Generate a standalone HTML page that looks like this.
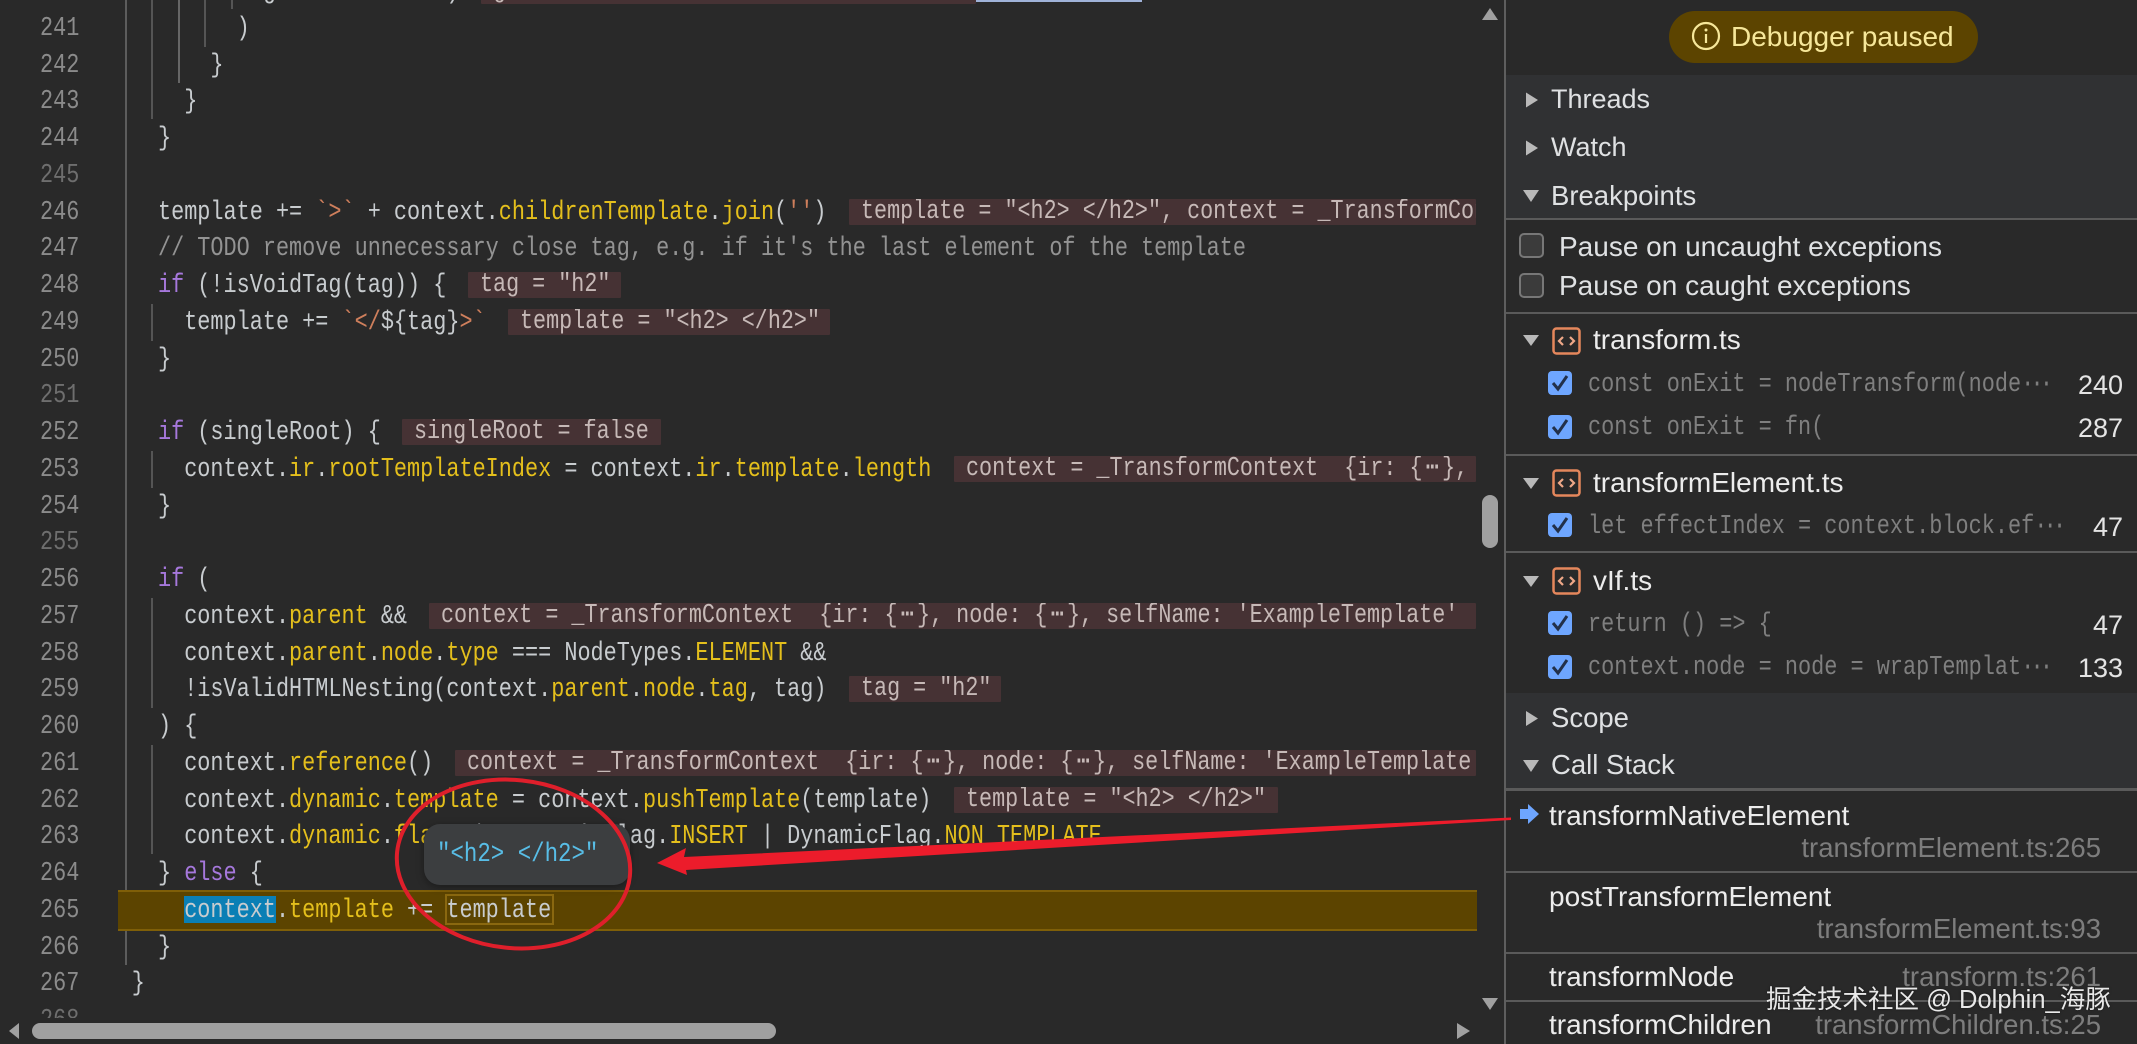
<!DOCTYPE html>
<html lang="en">
<head>
<meta charset="utf-8">
<title>Debugger paused</title>
<style>
html,body{margin:0;padding:0;background:#292929;width:2137px;height:1044px;overflow:hidden}
#root{position:relative;width:2137px;height:1044px;overflow:hidden;background:#292929;font-family:"Liberation Sans","Noto Sans CJK SC",sans-serif}
.abs{position:absolute}
#clip{position:absolute;left:0;top:0;width:1477px;height:1018px;overflow:hidden}
#code{position:absolute;left:39.8px;top:-26px;transform:scaleX(.809);transform-origin:0 0;font:27px/36.75px "Liberation Mono","DejaVu Sans Mono",monospace;color:#c8cccf}
#code div{height:36.75px;white-space:pre}
#code b{font-weight:normal;color:#e4bf1c}
#code em{font-style:normal;color:#a678dc}
#code s{text-decoration:none;color:#cf7f5c}
#code i{font-style:normal;color:#939393}
#code u{text-decoration:none;color:#8b8b8b}
#code u.d{color:#6e6e6e}
.g{position:absolute;width:2px;background:#555}
.h{position:absolute;height:26px;background:#463234;overflow:hidden;border-radius:1px}
.h span{position:absolute;left:11.5px;top:0;transform:scaleX(.805);transform-origin:0 0;white-space:pre;font:27px/26px "Liberation Mono","DejaVu Sans Mono",monospace;color:#c6b9b7}
.h a{padding:0 4px}
.sec{position:absolute;left:1506px;width:631px;background:#303133}
.div{position:absolute;left:1506px;width:631px;height:2px;background:#5a5a5a}
.t{position:absolute;white-space:pre;font-size:28px;line-height:38px;height:38px;color:#dfe1e3}
.m{position:absolute;left:1588px;white-space:pre;font:27px/36px "Liberation Mono","DejaVu Sans Mono",monospace;color:#7f7f7f;transform:scaleX(.81);transform-origin:0 0}
.m span{letter-spacing:-4.6px}
.n{position:absolute;right:14px;white-space:pre;font-size:27px;line-height:38px;color:#e4e4e4}
.l{position:absolute;right:36px;white-space:pre;font-size:27.5px;line-height:38px;color:#7d7d7d}
.cb{position:absolute;left:1518.5px;width:21px;height:21px;border:2px solid #777;border-radius:5px;background:#3b3b3b}
svg{position:absolute;overflow:visible}
</style>
</head>
<body>
<div id="root">

<!-- indent guides -->
<div class="g" style="left:125px;top:0;height:965px;background:#5c5c5c"></div>
<div class="g" style="left:151px;top:0;height:119px"></div>
<div class="g" style="left:151px;top:304px;height:37px"></div>
<div class="g" style="left:151px;top:451px;height:37px"></div>
<div class="g" style="left:151px;top:598px;height:110px"></div>
<div class="g" style="left:151px;top:745px;height:109px"></div>
<div class="g" style="left:177.5px;top:0;height:83px;background:#666"></div>
<div class="g" style="left:204px;top:0;height:47px"></div>
<div class="g" style="left:230.5px;top:0;height:9px"></div>

<!-- paused line -->
<div class="abs" style="left:118px;top:890px;width:1359px;height:37px;background:#5c4400;border-top:2px solid #7f5f08;border-bottom:2px solid #7f5f08"></div>
<div class="abs" style="left:184px;top:896px;width:92px;height:27px;background:#0a7fb5"></div>
<div class="abs" style="left:445px;top:894px;width:105px;height:27px;border:2px solid #8a6810"></div>

<!-- inline value hints -->
<div class="h" style="left:481px;top:-22px;width:495px"><span>g                 &lt;&gt;</span></div>
<div class="abs" style="left:976px;top:0;width:166px;height:2px;background:#9fb2d8"></div>
<div class="h" style="left:849px;top:198.5px;width:627px"><span>template = &#8243;&lt;h2&gt; &lt;/h2&gt;&#8243;, context = _TransformContext</span></div>
<div class="h" style="left:468px;top:272px;width:152.5px"><span>tag = &#8243;h2&#8243;</span></div>
<div class="h" style="left:508px;top:308.7px;width:322px"><span>template = &#8243;&lt;h2&gt; &lt;/h2&gt;&#8243;</span></div>
<div class="h" style="left:402.3px;top:419px;width:258.4px"><span>singleRoot = false</span></div>
<div class="h" style="left:954px;top:455.7px;width:522px"><span>context = _TransformContext  {ir: {<a>⋯</a>}, node: {<a>⋯</a>}</span></div>
<div class="h" style="left:429px;top:602.7px;width:1047px"><span>context = _TransformContext  {ir: {<a>⋯</a>}, node: {<a>⋯</a>}, selfName: 'ExampleTemplate'</span></div>
<div class="h" style="left:849px;top:676.2px;width:152px"><span>tag = &#8243;h2&#8243;</span></div>
<div class="h" style="left:455px;top:749.7px;width:1021px"><span>context = _TransformContext  {ir: {<a>⋯</a>}, node: {<a>⋯</a>}, selfName: 'ExampleTemplate'</span></div>
<div class="h" style="left:954px;top:786.5px;width:323.7px"><span>template = &#8243;&lt;h2&gt; &lt;/h2&gt;&#8243;</span></div>

<!-- code -->
<div id="clip"><div id="code">
<div><u>240</u>              g             )</div>
<div><u>241</u>            )</div>
<div><u>242</u>          }</div>
<div><u>243</u>        }</div>
<div><u>244</u>      }</div>
<div><u class="d">245</u></div>
<div><u>246</u>      template += <s>`&gt;`</s> + context.<b>childrenTemplate</b>.<b>join</b>(<s>''</s>)</div>
<div><u>247</u>      <i>// TODO remove unnecessary close tag, e.g. if it's the last element of the template</i></div>
<div><u>248</u>      <em>if</em> (!isVoidTag(tag)) {</div>
<div><u>249</u>        template += <s>`&lt;/</s>${tag}<s>&gt;`</s></div>
<div><u>250</u>      }</div>
<div><u class="d">251</u></div>
<div><u>252</u>      <em>if</em> (singleRoot) {</div>
<div><u>253</u>        context.<b>ir</b>.<b>rootTemplateIndex</b> = context.<b>ir</b>.<b>template</b>.<b>length</b></div>
<div><u>254</u>      }</div>
<div><u class="d">255</u></div>
<div><u>256</u>      <em>if</em> (</div>
<div><u>257</u>        context.<b>parent</b> &amp;&amp;</div>
<div><u>258</u>        context.<b>parent</b>.<b>node</b>.<b>type</b> === NodeTypes.<b>ELEMENT</b> &amp;&amp;</div>
<div><u>259</u>        !isValidHTMLNesting(context.<b>parent</b>.<b>node</b>.<b>tag</b>, tag)</div>
<div><u>260</u>      ) {</div>
<div><u>261</u>        context.<b>reference</b>()</div>
<div><u>262</u>        context.<b>dynamic</b>.<b>template</b> = context.<b>pushTemplate</b>(template)</div>
<div><u>263</u>        context.<b>dynamic</b>.<b>flags</b> |= DynamicFlag.<b>INSERT</b> | DynamicFlag.<b>NON_TEMPLATE</b></div>
<div><u>264</u>      } <em>else</em> {</div>
<div><u>265</u>        context.<b>template</b> += template</div>
<div><u>266</u>      }</div>
<div><u>267</u>    }</div>
<div><u class="d">268</u></div>
</div></div>

<!-- tooltip -->
<div class="abs" style="left:424px;top:824px;width:206px;height:61px;background:#3c3e40;border-radius:16px;box-shadow:0 2px 8px rgba(0,0,0,.35)"></div>
<div class="abs" style="left:437px;top:837px;transform:scaleX(.83);transform-origin:0 0;white-space:pre;font:27px/36px 'Liberation Mono','DejaVu Sans Mono',monospace;color:#58bde6">&#8243;&lt;h2&gt; &lt;/h2&gt;&#8243;</div>

<!-- scrollbars -->
<svg style="left:0;top:0" width="2137" height="1044" viewBox="0 0 2137 1044">
<path d="M1490 8L1498 20H1482Z" fill="#a0a0a0"/>
<path d="M1482 998H1498L1490 1010Z" fill="#a0a0a0"/>
<rect x="1482" y="495" width="16" height="53" rx="8" fill="#a0a0a0"/>
<path d="M19 1023V1039L9 1031Z" fill="#a0a0a0"/>
<path d="M1457 1023V1039L1470 1031Z" fill="#a0a0a0"/>
<rect x="32" y="1023" width="744" height="16" rx="8" fill="#a0a0a0"/>
</svg>

<!-- right panel -->
<div class="abs" style="left:1504px;top:0;width:2px;height:1044px;background:#5e5e5e"></div>
<div class="sec" style="top:75px;height:144px"></div>
<div class="sec" style="top:693px;height:97px"></div>
<div class="abs" style="left:1669px;top:11px;width:309px;height:52px;border-radius:26px;background:#5c4400"></div>
<svg style="left:1690px;top:22px" width="32" height="30" viewBox="0 0 32 30"><ellipse cx="16" cy="14" rx="13" ry="13" fill="none" stroke="#f6e79a" stroke-width="2.2"/><path d="M16 12V21" stroke="#f6e79a" stroke-width="2.2"/><circle cx="16" cy="8" r="1.5" fill="#f6e79a"/></svg>
<div class="t" style="left:1731px;top:18px;color:#f6e79a">Debugger paused</div>

<div class="t" style="left:1551px;top:80px;font-size:27px">Threads</div>
<div class="t" style="left:1551px;top:128px;font-size:27px">Watch</div>
<div class="t" style="left:1551px;top:177px;font-size:27.5px">Breakpoints</div>
<svg style="left:0;top:0" width="2137" height="1044" viewBox="0 0 2137 1044">
<path d="M1526 92.500L1538 100L1526 107.500Z" fill="#b9b9b9"/>
<path d="M1526 140.500L1538 148L1526 155.500Z" fill="#b9b9b9"/>
<path d="M1523 190H1539L1531 202Z" fill="#b9b9b9"/>
<path d="M1523 335H1539L1531 346Z" fill="#b9b9b9"/>
<path d="M1523 478H1539L1531 489Z" fill="#b9b9b9"/>
<path d="M1523 576H1539L1531 587Z" fill="#b9b9b9"/>
<path d="M1526 711L1538 718.500L1526 726Z" fill="#b9b9b9"/>
<path d="M1523 760H1539L1531 772Z" fill="#b9b9b9"/>
<path d="M1520 809H1528V804L1539 814L1528 824V819H1520Z" fill="#6ea6ff"/>
</svg>
<div class="div" style="top:218px"></div>

<div class="cb" style="top:233px"></div>
<div class="t" style="left:1559px;top:228px">Pause on uncaught exceptions</div>
<div class="cb" style="top:273px"></div>
<div class="t" style="left:1559px;top:267px">Pause on caught exceptions</div>
<div class="div" style="top:312px"></div>

<svg style="left:1552px;top:327px" width="29" height="28" viewBox="0 0 29 28"><rect x="1.500" y="1.500" width="26" height="25" rx="3" fill="none" stroke="#e5875c" stroke-width="2.500"/><path d="M11 10L7 14L11 18M18 10L22 14L18 18" fill="none" stroke="#efa888" stroke-width="2.200"/></svg>
<div class="t" style="left:1593px;top:321px;color:#ececec">transform.ts</div>

<svg style="left:1548px;top:371px" width="24" height="24" viewBox="0 0 24 24"><rect width="24" height="24" rx="4" fill="#6ea6ff"/><path d="M5 12L10 18L19 5" fill="none" stroke="#22304a" stroke-width="3"/></svg>
<div class="m" style="top:367px">const onExit = nodeTransform(node<span>···</span></div>
<div class="n" style="top:366px">240</div>
<svg style="left:1548px;top:415px" width="24" height="24" viewBox="0 0 24 24"><rect width="24" height="24" rx="4" fill="#6ea6ff"/><path d="M5 12L10 18L19 5" fill="none" stroke="#22304a" stroke-width="3"/></svg>
<div class="m" style="top:410px">const onExit = fn(</div>
<div class="n" style="top:409px">287</div>
<div class="div" style="top:454px"></div>

<svg style="left:1552px;top:469px" width="29" height="28" viewBox="0 0 29 28"><rect x="1.500" y="1.500" width="26" height="25" rx="3" fill="none" stroke="#e5875c" stroke-width="2.500"/><path d="M11 10L7 14L11 18M18 10L22 14L18 18" fill="none" stroke="#efa888" stroke-width="2.200"/></svg>
<div class="t" style="left:1593px;top:464px;color:#ececec">transformElement.ts</div>

<svg style="left:1548px;top:513px" width="24" height="24" viewBox="0 0 24 24"><rect width="24" height="24" rx="4" fill="#6ea6ff"/><path d="M5 12L10 18L19 5" fill="none" stroke="#22304a" stroke-width="3"/></svg>
<div class="m" style="top:509px">let effectIndex = context.block.ef<span>···</span></div>
<div class="n" style="top:508px">47</div>
<div class="div" style="top:551px"></div>

<svg style="left:1552px;top:567px" width="29" height="28" viewBox="0 0 29 28"><rect x="1.500" y="1.500" width="26" height="25" rx="3" fill="none" stroke="#e5875c" stroke-width="2.500"/><path d="M11 10L7 14L11 18M18 10L22 14L18 18" fill="none" stroke="#efa888" stroke-width="2.200"/></svg>
<div class="t" style="left:1593px;top:562px;color:#ececec">vIf.ts</div>

<svg style="left:1548px;top:611px" width="24" height="24" viewBox="0 0 24 24"><rect width="24" height="24" rx="4" fill="#6ea6ff"/><path d="M5 12L10 18L19 5" fill="none" stroke="#22304a" stroke-width="3"/></svg>
<div class="m" style="top:607px">return () =&gt; {</div>
<div class="n" style="top:606px">47</div>
<svg style="left:1548px;top:655px" width="24" height="24" viewBox="0 0 24 24"><rect width="24" height="24" rx="4" fill="#6ea6ff"/><path d="M5 12L10 18L19 5" fill="none" stroke="#22304a" stroke-width="3"/></svg>
<div class="m" style="top:650px">context.node = node = wrapTemplat<span>···</span></div>
<div class="n" style="top:649px">133</div>

<div class="t" style="left:1551px;top:699px;font-size:27.5px">Scope</div>
<div class="t" style="left:1551px;top:746px;font-size:27.5px">Call Stack</div>
<div class="abs" style="left:1506px;top:788px;width:631px;height:3px;background:#5a5a5a"></div>

<div class="t" style="left:1549px;top:797px;color:#ececec">transformNativeElement</div>
<div class="l" style="top:829px">transformElement.ts:265</div>
<div class="div" style="top:871px"></div>
<div class="t" style="left:1549px;top:878px;color:#ececec">postTransformElement</div>
<div class="l" style="top:910px">transformElement.ts:93</div>
<div class="div" style="top:952px"></div>
<div class="t" style="left:1549px;top:958px;color:#ececec">transformNode</div>
<div class="l" style="top:958px">transform.ts:261</div>
<div class="div" style="top:1000px"></div>
<div class="t" style="left:1549px;top:1006px;color:#ececec">transformChildren</div>
<div class="l" style="top:1006px">transformChildren.ts:25</div>

<!-- annotations -->
<svg style="left:0;top:0" width="2137" height="1044" viewBox="0 0 2137 1044">
<ellipse cx="513.500" cy="864" rx="117" ry="84" transform="rotate(6 513.500 864)" fill="none" stroke="#df1f2b" stroke-width="4"/>
<path d="M657 863L686 848L684 857L1511 817.500V820L686 870L687 875Z" fill="#ec1c2b"/>
</svg>

<!-- watermark -->
<div class="abs" style="left:1766px;top:981px;white-space:pre;font:25.500px/38px 'Liberation Sans','Noto Sans CJK SC',sans-serif;color:#e8e8e8;text-shadow:0 0 2px rgba(0,0,0,.5)">掘金技术社区 @ Dolphin_海豚</div>

</div>
</body>
</html>
